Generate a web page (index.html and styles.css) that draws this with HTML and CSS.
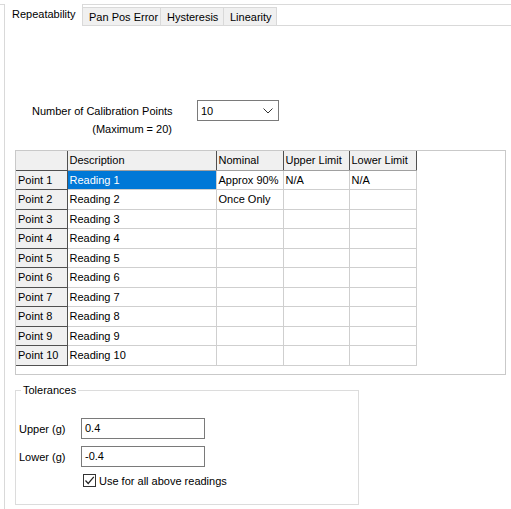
FILE: index.html
```html
<!DOCTYPE html>
<html>
<head>
<meta charset="utf-8">
<link rel="stylesheet" href="styles.css">
</head>
<body>
<div class="frame">
  <div class="tabstrip">
    <div class="tab active">Repeatability</div>
    <div class="tab t2">Pan Pos Error</div>
    <div class="tab t3">Hysteresis</div>
    <div class="tab t4">Linearity</div>
  </div>
  <div class="panel">
    <div class="calib">
      <div class="calib-label">Number of Calibration Points</div>
      <div class="combo"><span>10</span>
        <svg class="chev" width="10" height="6" viewBox="0 0 10 6"><path d="M0.5 0.5 L5 5 L9.5 0.5" fill="none" stroke="#333" stroke-width="1"/></svg>
      </div>
      <div class="calib-max">(Maximum = 20)</div>
    </div>
    <div class="gridbox">
      <table class="grid">
        <colgroup>
          <col class="c0"><col class="c1"><col class="c2"><col class="c3"><col class="c4">
        </colgroup>
        <thead>
          <tr><th class="corner"></th><th>Description</th><th>Nominal</th><th>Upper Limit</th><th>Lower Limit</th></tr>
        </thead>
        <tbody>
          <tr><th>Point 1</th><td class="sel">Reading 1</td><td>Approx 90%</td><td>N/A</td><td>N/A</td></tr>
          <tr><th>Point 2</th><td>Reading 2</td><td>Once Only</td><td></td><td></td></tr>
          <tr><th>Point 3</th><td>Reading 3</td><td></td><td></td><td></td></tr>
          <tr><th>Point 4</th><td>Reading 4</td><td></td><td></td><td></td></tr>
          <tr><th>Point 5</th><td>Reading 5</td><td></td><td></td><td></td></tr>
          <tr><th>Point 6</th><td>Reading 6</td><td></td><td></td><td></td></tr>
          <tr><th>Point 7</th><td>Reading 7</td><td></td><td></td><td></td></tr>
          <tr><th>Point 8</th><td>Reading 8</td><td></td><td></td><td></td></tr>
          <tr><th>Point 9</th><td>Reading 9</td><td></td><td></td><td></td></tr>
          <tr><th>Point 10</th><td>Reading 10</td><td></td><td></td><td></td></tr>
        </tbody>
      </table>
    </div>
    <fieldset class="tol">
      <legend>Tolerances</legend>
      <div class="tol-grid">
        <label class="tol-label">Upper (g)</label>
        <div class="textbox">0.4</div>
        <label class="tol-label">Lower (g)</label>
        <div class="textbox">-0.4</div>
        <div></div>
        <div class="check">
          <span class="box"><svg width="11" height="11" viewBox="0 0 11 11"><path d="M1.5 5.5 L4.2 8.5 L9.8 1.8" fill="none" stroke="#222" stroke-width="1.2"/></svg></span>
          <span>Use for all above readings</span>
        </div>
      </div>
    </fieldset>
  </div>
</div>
</body>
</html>
```

FILE: styles.css
```css
html, body {
  margin: 0;
  padding: 0;
  background: #ffffff;
}
body {
  font-family: "Liberation Sans", Arial, sans-serif;
  font-size: 11px;
  color: #000;
  width: 511px;
  height: 509px;
  overflow: hidden;
}
.frame {
  margin-top: 4px;
  border-top: 1px solid #dadada;
}
.tabstrip {
  display: flex;
  align-items: flex-end;
  height: 20px;
  padding-left: 4px;
  position: relative;
  z-index: 2;
}
.tab {
  height: 18px;
  line-height: 18px;
  border: 1px solid #d9d9d9;
  border-bottom: none;
  border-left: none;
  background: #f0f0f0;
  padding: 0 5px 0 6px;
  box-sizing: border-box;
  white-space: nowrap;
}
.tab.active {
  height: 22px;
  line-height: 20px;
  margin-bottom: -1px;
  background: #ffffff;
  border-left: 1px solid #d9d9d9;
  border-top: none;
  padding: 0 6px 0 7px;
  width: 79px;
}
.tab.t2 { width: 78px; }
.tab.t3 { width: 63px; }
.tab.t4 { width: 53px; }
.panel {
  margin-left: 4px;
  border-top: 1px solid #d9d9d9;
  border-left: 1px solid #d9d9d9;
  height: 484px;
}
.calib {
  display: grid;
  grid-template-columns: 140px 82px;
  column-gap: 25px;
  align-items: center;
  margin: 74px 0 0 27px;
}
.calib-label {
  white-space: nowrap;
}
.calib-max {
  text-align: right;
  margin-top: 2px;
  line-height: 13px;
}
.combo {
  height: 21px;
  box-sizing: border-box;
  border: 1px solid #7a7a7a;
  display: flex;
  align-items: center;
  justify-content: space-between;
  padding: 0 5px 0 3px;
  background: #fff;
}
.chev {
  display: block;
}
.gridbox {
  margin: 14px 0 0 10px;
  width: 491px;
  height: 225px;
  box-sizing: border-box;
  border: 1px solid #c9c9c9;
  background: #fff;
}
.grid {
  border-collapse: collapse;
  table-layout: fixed;
  width: 400px;
}
.c0 { width: 51px; }
.c1 { width: 149px; }
.c2 { width: 67px; }
.c3 { width: 66px; }
.c4 { width: 67px; }
.grid th, .grid td {
  padding: 0 2px;
  text-align: left;
  font-weight: normal;
  white-space: nowrap;
  overflow: hidden;
  height: 19.5px;
  box-sizing: border-box;
}
.grid td {
  border-right: 1px solid #cfcfcf;
  border-bottom: 1px solid #cfcfcf;
}
.grid thead th {
  height: 19px;
  background: #f0f0f0;
  border-right: 1px solid #505050;
  border-bottom: 1px solid #a0a0a0;
}
.grid tbody th {
  background: #f0f0f0;
  border-right: 1px solid #505050;
  border-bottom: 1px solid #505050;
}
.grid thead th.corner {
  border-bottom: 1px solid #505050;
}
.grid td.sel {
  background: #0078d7;
  color: #fff;
}
.tol {
  margin: 9px 0 0 10px;
  width: 344px;
  height: 121px;
  box-sizing: border-box;
  border: 1px solid #dcdcdc;
  padding: 0 0 0 3px;
}
.tol legend {
  margin-left: 2px;
  padding: 0 2px;
  line-height: 13px;
}
.tol-grid {
  display: grid;
  grid-template-columns: 62px 124px;
  grid-auto-rows: auto;
  row-gap: 7px;
  align-items: center;
  margin-top: 21px;
}
.textbox {
  height: 21px;
  box-sizing: border-box;
  border: 1px solid #7a7a7a;
  line-height: 19px;
  padding-left: 3px;
}
.check {
  display: flex;
  align-items: center;
  gap: 3px;
  margin-left: 2px;
  margin-top: 0;
  white-space: nowrap;
}
.box {
  width: 13px;
  height: 13px;
  box-sizing: border-box;
  border: 1px solid #333;
  display: flex;
  align-items: center;
  justify-content: center;
  background: #fff;
}
.box svg { display: block; }
```
